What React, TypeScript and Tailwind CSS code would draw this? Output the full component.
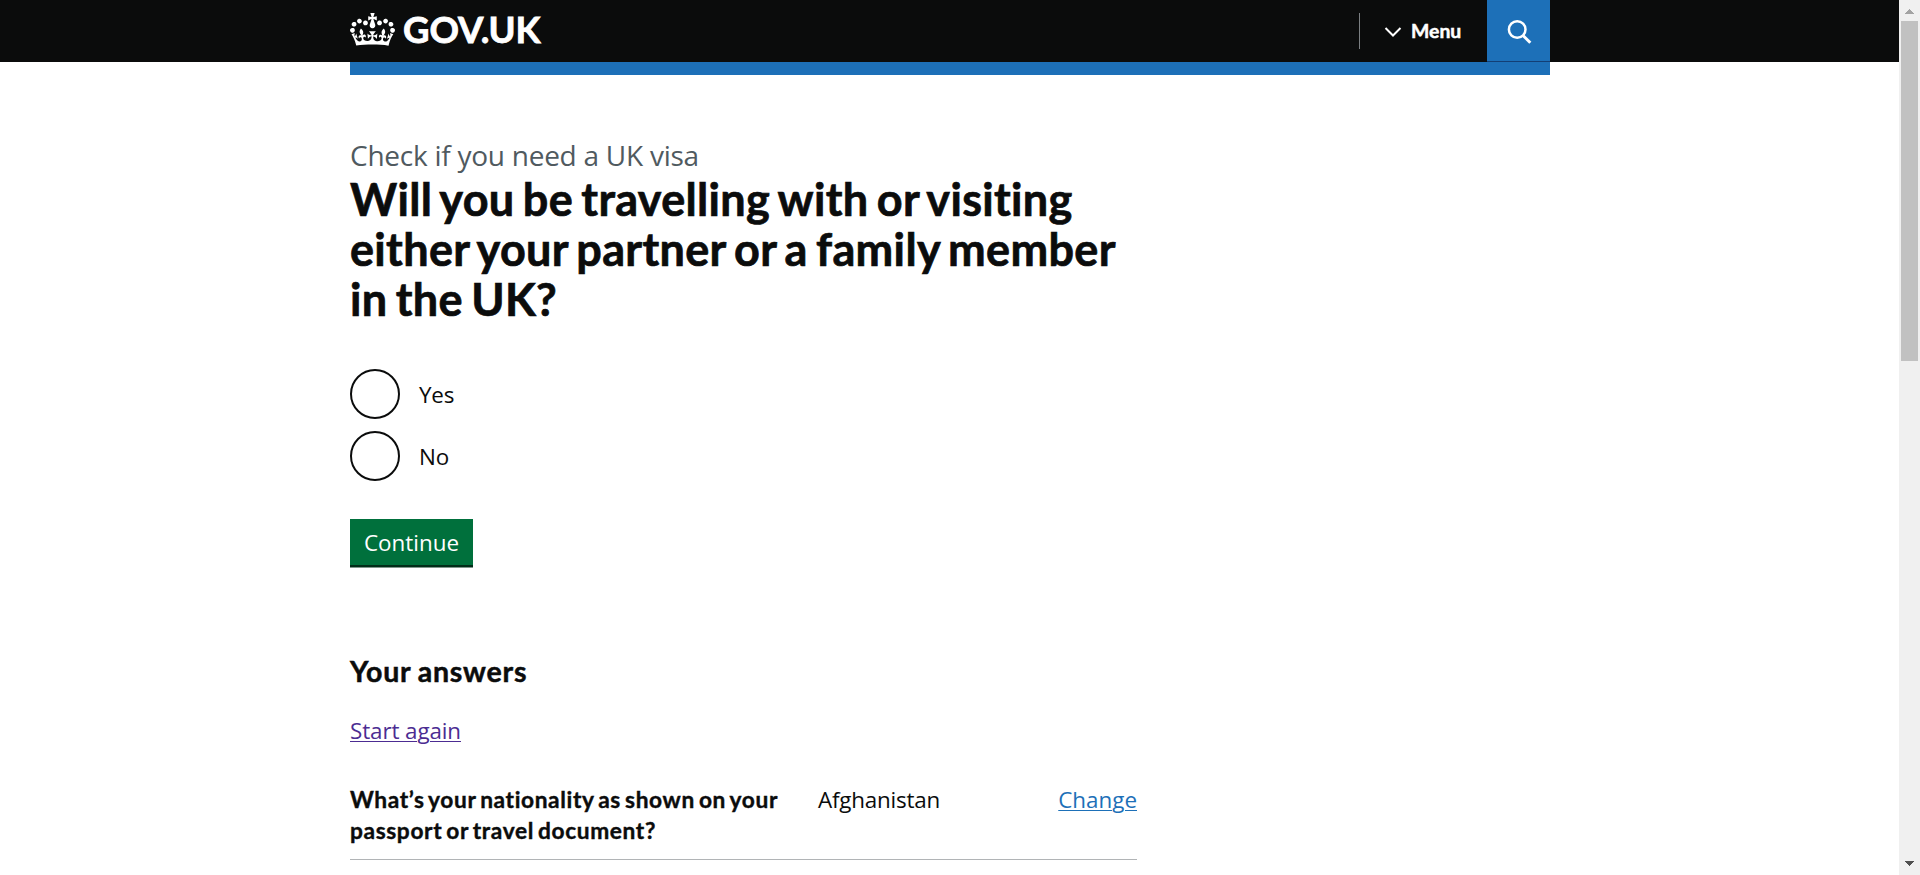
const crown =
  "M25 30.2c3.5 1.5 7.7-.2 9.1-3.7 1.5-3.6-.2-7.8-3.9-9.2-3.6-1.4-7.6.3-9.1 3.9-1.4 3.5.3 7.5 3.9 9zM9 39.5c3.6 1.5 7.8-.2 9.2-3.7 1.5-3.6-.2-7.8-3.9-9.1-3.6-1.5-7.6.2-9.1 3.8-1.4 3.5.3 7.5 3.8 9zM4.4 57.2c3.5 1.5 7.7-.2 9.1-3.8 1.5-3.6-.2-7.7-3.9-9.1-3.5-1.5-7.6.3-9.1 3.8-1.4 3.5.3 7.6 3.9 9.1zm38.3-21.4c3.5 1.5 7.7-.2 9.1-3.8 1.5-3.6-.2-7.7-3.9-9.1-3.6-1.5-7.6.3-9.1 3.8-1.3 3.6.4 7.7 3.9 9.1zm64.4-5.6c-3.6 1.5-7.8-.2-9.1-3.7-1.5-3.6.2-7.8 3.8-9.2 3.6-1.4 7.7.3 9.2 3.9 1.3 3.5-.4 7.5-3.9 9zm15.9 9.3c-3.6 1.5-7.7-.2-9.1-3.7-1.5-3.6.2-7.8 3.7-9.1 3.6-1.5 7.7.2 9.2 3.8 1.5 3.5-.3 7.5-3.8 9zm4.7 17.7c-3.6 1.5-7.8-.2-9.2-3.8-1.5-3.6.2-7.7 3.9-9.1 3.6-1.5 7.7.3 9.2 3.8 1.3 3.5-.4 7.6-3.9 9.1zM89.3 35.8c-3.6 1.5-7.8-.2-9.2-3.8-1.4-3.6.2-7.7 3.9-9.1 3.6-1.5 7.7.3 9.2 3.8 1.4 3.6-.3 7.7-3.9 9.1zM69.7 17.7l8.9 4.7V9.3l-8.9 2.8c-.2-.3-.5-.6-.9-.9L72.4 0H59.6l3.5 11.2c-.3.3-.6.5-.9.9l-8.8-2.8v13.1l8.8-4.7c.3.3.6.7.9.9l-5 15.4v.1c-.2.8-.4 1.6-.4 2.4 0 4.1 3.1 7.5 7 8.1h.2c.3 0 .7.1 1 .1.4 0 .7 0 1-.1h.2c4-.6 7.1-4.1 7.1-8.1 0-.8-.1-1.7-.4-2.4V34l-5.1-15.4c.4-.2.7-.6 1-.9zM66 92.8c16.9 0 32.8 1.1 47.1 3.2 4-16.9 8.9-26.7 14-33.5l-9.6-3.4c1 4.9 1.1 7.2 0 10.2-1.5-1.4-3-4.3-4.2-8.7L108.6 76c2.8-2 5-3.2 7.5-3.3-4.4 9.4-10 11.9-13.6 11.2-4.3-.8-6.3-4.6-5.6-7.9 1-4.7 5.7-5.9 8-.5 4.3-8.7-3-11.4-7.6-8.8 7.1-7.2 7.9-13.5 2.1-21.1-8 6.1-8.1 12.3-4.5 20.8-4.7-5.4-12.1-2.5-9.5 6.2 3.4-5.2 7.9-2 7.2 3.1-.6 4.3-6.4 7.8-13.5 7.2-10.3-.9-10.9-8-11.2-13.8 2.5-.5 7.1 1.8 11 7.3L80.2 60c-4.1 4.4-8 5.3-12.3 5.4 1.4-4.4 8-11.6 8-11.6H55.5s6.4 7.2 7.9 11.6c-4.2-.1-8-1-12.3-5.4l1.4 16c3.9-5.5 8.5-7.7 10.9-7.3-.3 5.8-.9 12.8-11.1 13.8-7.2.6-12.9-2.9-13.5-7.2-.7-5 3.8-8.3 7.1-3.1 2.7-8.7-4.6-11.6-9.4-6.2 3.7-8.5 3.6-14.7-4.6-20.8-5.8 7.6-5 13.9 2.2 21.1-4.7-2.6-11.9.1-7.7 8.8 2.3-5.5 7.1-4.2 8.1.5.7 3.3-1.3 7.1-5.7 7.9-3.5.7-9-1.8-13.5-11.2 2.5.1 4.7 1.3 7.5 3.3l-4.7-15.4c-1.2 4.4-2.7 7.2-4.3 8.7-1.1-3-.9-5.3 0-10.2l-9.5 3.4c5 6.9 9.9 16.7 14 33.6 14.8-2.1 30.8-3.2 47.7-3.2z";

function Header() {
  return (
    <header className="h-[62px] bg-[#0b0c0c] text-white">
      <div className="ml-[350px] flex h-full w-[1200px] items-start">
        <a href="#" className="flex items-start">
          <svg viewBox="0 0 132 97" className="mt-[13px] h-[33px] w-[45px]" fill="currentColor" aria-hidden="true">
            <path d={crown} />
          </svg>
          <span className="ml-2 font-['Lato',sans-serif] text-[36.5px] leading-[58px] font-bold tracking-[-0.1px] [-webkit-text-stroke:0.8px]">
            GOV.UK
          </span>
        </a>
        <nav className="ml-auto flex h-full items-start">
          <span className="mt-[13px] h-9 w-px bg-[#7b7f82]" />
          <button className="ml-6 flex h-[61px] items-center">
            <svg viewBox="0 0 18 10" className="mt-[3px] h-2.5 w-[18px]" fill="none" stroke="currentColor" strokeWidth="2" aria-hidden="true">
              <path d="M1.5 1 9 8.5 16.5 1" />
            </svg>
            <span className="ml-[9px] w-[52px] text-left font-['Lato',sans-serif] text-[19.4px] leading-[61px] font-bold [-webkit-text-stroke:0.5px]">
              Menu
            </span>
          </button>
          <button
            aria-label="Search"
            className="ml-6 flex h-[62px] w-[63px] border-b border-[#133f75] bg-[#1d70b8] pt-[19px] pl-5"
          >
            <svg viewBox="0 0 25 26" className="h-[26px] w-[25px]" fill="none" stroke="currentColor" aria-hidden="true">
              <circle cx="10.2" cy="10.5" r="8.3" strokeWidth="2.5" />
              <path d="m16 16.5 7.3 7.3" strokeWidth="3" />
            </svg>
          </button>
        </nav>
      </div>
    </header>
  );
}

function Radio({ label }: { label: string }) {
  return (
    <label className="flex items-center">
      <span className="size-[50px] rounded-full border-[2.5px] border-[#0b0c0c]" />
      <span className="ml-[19px] leading-[31px] tracking-[-0.2px]">{label}</span>
    </label>
  );
}

function Scrollbar() {
  return (
    <div className="flex w-[21px] shrink-0 flex-col items-center bg-[#f0f0f0]">
      <svg viewBox="0 0 9 5" className="mt-[9px] h-[5px] w-[9px]" fill="#a3a3a3" shapeRendering="crispEdges">
        <path d="M4.5 0 9 5H0z" />
      </svg>
      <div className="mt-[7px] h-[340px] w-[17px] bg-[#c1c1c1]" />
      <svg viewBox="0 0 9 5" className="mt-auto mb-[9px] h-[5px] w-[9px]" fill="#505050" shapeRendering="crispEdges">
        <path d="M0 0h9L4.5 5z" />
      </svg>
    </div>
  );
}

export default function App() {
  return (
    <div className="flex h-[875px] overflow-hidden bg-white font-['Open_Sans',sans-serif] text-[22.4px] text-[#0b0c0c]">
      <div className="flex-1">
        <Header />
        <div className="ml-[350px] h-[13px] w-[1200px] bg-[#1d70b8]" />
        <main className="ml-[350px] w-[787px] pt-[61px] whitespace-nowrap">
          <span className="block text-[28px] leading-[38px] tracking-[-0.25px] text-[#505a5f]">
            Check if you need a UK visa
          </span>
          <h1 className="font-['Lato',sans-serif] text-[45px] leading-[50px] font-bold tracking-[0.33px] [word-spacing:-3px] [-webkit-text-stroke:0.7px]">
            Will you be travelling with or visiting
            <br />
            either your partner or a family member
            <br />
            in the UK?
          </h1>
          <div className="mt-[45px] flex flex-col gap-3">
            <Radio label="Yes" />
            <Radio label="No" />
          </div>
          <button className="mt-[38px] block h-[46px] w-[123px] bg-[#00703c] pt-px text-white shadow-[0_2.5px_0_#002d18]">
            Continue
          </button>
          <h2 className="mt-[87px] font-['Lato',sans-serif] text-[28.5px] leading-[38px] font-bold tracking-[0.8px] [word-spacing:-1px] [-webkit-text-stroke:0.5px]">
            Your answers
          </h2>
          <p className="mt-[25px] leading-[31px]">
            <a href="#" className="tracking-[-0.1px] text-[#4c2c92] underline decoration-1 underline-offset-[2px]">
              Start again
            </a>
          </p>
          <dl className="mt-[38px] flex h-[76px] border-b border-[#b1b4b6] leading-[31px]">
            <dt className="w-[468px] font-['Lato',sans-serif] text-[22.7px] font-bold tracking-[0.63px] [word-spacing:-2px] [-webkit-text-stroke:0.4px]">
              What’s your nationality as shown on your
              <br />
              passport or travel document?
            </dt>
            <dd className="tracking-[-0.2px]">Afghanistan</dd>
            <dd className="ml-auto">
              <a href="#" className="text-[#1d70b8] underline decoration-1 underline-offset-[2px]">
                Change
              </a>
            </dd>
          </dl>
        </main>
      </div>
      <Scrollbar />
    </div>
  );
}
